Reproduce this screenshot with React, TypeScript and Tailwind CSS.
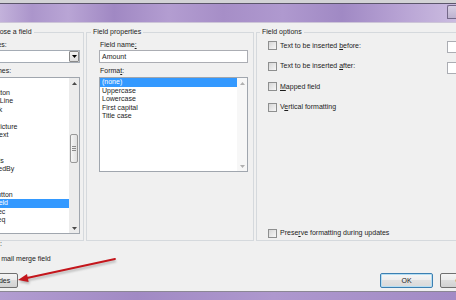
import React from 'react';

const fieldNames = [
  'Fill-in',
  'GoToButton',
  'GreetingLine',
  'Hyperlink',
  'If',
  'IncludePicture',
  'IncludeText',
  'Index',
  'Info',
  'Keywords',
  'LastSavedBy',
  'Link',
  'ListNum',
  'MacroButton',
  'MergeField',
  'MergeRec',
  'MergeSeq',
  'Next',
  'NextIf',
];

const formats = ['(none)', 'Uppercase', 'Lowercase', 'First capital', 'Title case'];

function Tri({ up, dim }: { up?: boolean; dim?: boolean }) {
  return (
    <svg width="5" height="3" viewBox="0 0 5 3">
      <path d={up ? 'M0 3L2.5 0L5 3Z' : 'M0 0L5 0L2.5 3Z'} fill={dim ? '#b0b0b0' : '#4a4a4a'} />
    </svg>
  );
}

function CheckBox() {
  return (
    <div className="h-[9px] w-[9px] shrink-0 border border-[#8e8f8f] bg-[linear-gradient(135deg,#d6d6d6,#f7f7f7)]" />
  );
}

function Button({ label, primary }: { label: string; primary?: boolean }) {
  return (
    <div
      className={
        primary
          ? 'flex h-[15px] w-[53px] shrink-0 items-center justify-center rounded-[2px] border border-[#3c7fb1] bg-[linear-gradient(#f6f6f6,#ededed_50%,#e1e1e1_50%,#d9d9d9)] shadow-[inset_0_0_0_1px_#b5def3]'
          : 'flex h-[15px] w-[53px] shrink-0 items-center justify-center rounded-[2px] border border-[#707070] bg-[linear-gradient(#f4f4f4,#ebebeb_50%,#dddddd_50%,#d1d1d1)]'
      }
    >
      {label}
    </div>
  );
}

export default function App() {
  return (
    <div className="relative h-[300px] w-[456px] overflow-hidden bg-[#f0f0f0] font-['Liberation_Sans',Arial,sans-serif] text-[7px] leading-[8px] text-[#1c1c1c]">
      {/* Window title bar */}
      <div className="h-[3px] bg-[#d3d3d6]" />
      <div className="h-[1px] bg-[#5c566b]" />
      <div className="flex h-[18px] justify-end bg-[linear-gradient(90deg,#c3b2db_0%,#ab95cb_7%,#b9a5d5_15%,#a088c3_25%,#b39dd1_37%,#a68ec7_49%,#af99cf_62%,#a089c4_75%,#b6a1d3_87%,#cbbce0_100%)]">
        <div className="mt-[1px] h-[14px] w-[9px] rounded-tl-[2px] border border-r-0 border-[#736888] bg-[linear-gradient(#d8d0e4,#bdb2cf)]" />
      </div>
      <div className="h-[1px] bg-[#cdc5d8]" />

      {/* Dialog body */}
      <div className="h-[268px] pt-[5px]">
        <div className="ml-[-42px] flex gap-[2px]">
          {/* Please choose a field */}
          <fieldset className="h-[213px] w-[126px] shrink-0 border border-[#d5d9dd] pl-[11px] pr-[3px]">
            <legend className="ml-[-7px] px-[2px] leading-[8px] whitespace-nowrap">Please choose a field</legend>
            <div className="flex flex-col">
              <div className="ml-[1px] mt-[5px] h-[8px] whitespace-nowrap">Categories:</div>
              <div className="mt-[1px] flex h-[13px] w-[110px] justify-end border border-[#a5acb5] bg-white">
                <div className="flex h-[11px] w-[10px] items-center justify-center rounded-[1px] border border-[#8a8a8a] bg-[linear-gradient(#f3f3f3,#dedede)]">
                  <svg width="5" height="3" viewBox="0 0 5 3">
                    <path d="M0 0L5 0L2.5 3Z" fill="#000" />
                  </svg>
                </div>
              </div>
              <div className="ml-[1px] mt-[4px] h-[8px] whitespace-nowrap">Field names:</div>
              <div className="mt-[2px] flex h-[157px] w-[110px] border border-[#a0a6ae] bg-white">
                <div className="flex-1 overflow-hidden pt-[2px]">
                  {fieldNames.map((name) => (
                    <div
                      key={name}
                      className={
                        name === 'MergeField'
                          ? 'h-[8.5px] whitespace-nowrap bg-[#3399ff] pl-[2px] leading-[8.5px] text-white'
                          : 'h-[8.5px] whitespace-nowrap pl-[2px] leading-[8.5px]'
                      }
                    >
                      {name}
                    </div>
                  ))}
                </div>
                <div className="flex w-[10px] flex-col bg-[#ececec]">
                  <div className="flex h-[10px] items-center justify-center">
                    <Tri up />
                  </div>
                  <div className="h-[46px]" />
                  <div className="mx-[1px] flex h-[29px] flex-col items-center justify-center gap-[1px] rounded-[2px] border border-[#989898] bg-[linear-gradient(90deg,#f5f5f5,#e0e0e0)]">
                    <div className="h-[1px] w-[4px] bg-[#8a8a8a]" />
                    <div className="h-[1px] w-[4px] bg-[#8a8a8a]" />
                    <div className="h-[1px] w-[4px] bg-[#8a8a8a]" />
                  </div>
                  <div className="flex-1" />
                  <div className="flex h-[10px] items-center justify-center">
                    <Tri />
                  </div>
                </div>
              </div>
            </div>
          </fieldset>

          {/* Field properties */}
          <fieldset className="h-[213px] w-[168px] shrink-0 border border-[#d5d9dd] pl-[12px] pr-[5px]">
            <legend className="ml-[-8px] px-[2px] leading-[8px]">Field properties</legend>
            <div className="flex flex-col">
              <div className="ml-[1px] mt-[5px] h-[8px]">
                Field name<span className="underline underline-offset-[1px]">:</span>
              </div>
              <div className="mt-[1px] flex h-[13px] w-[149px] items-center border border-[#abadb3] bg-white px-[2px]">
                Amount
              </div>
              <div className="ml-[1px] mt-[4px] h-[8px]">
                Forma<span className="underline underline-offset-[1px]">t</span>:
              </div>
              <div className="mt-[2px] flex h-[95px] w-[149px] border border-[#a0a6ae] bg-white">
                <div className="flex-1">
                  {formats.map((f, i) => (
                    <div
                      key={f}
                      className={
                        i === 0
                          ? 'h-[8.5px] bg-[#3399ff] pl-[2px] leading-[8.5px] text-white'
                          : 'h-[8.5px] pl-[2px] leading-[8.5px]'
                      }
                    >
                      {f}
                    </div>
                  ))}
                </div>
                <div className="flex w-[10px] flex-col justify-between bg-[#f7f7f7]">
                  <div className="flex h-[10px] items-center justify-center">
                    <Tri up dim />
                  </div>
                  <div className="flex h-[10px] items-center justify-center">
                    <Tri dim />
                  </div>
                </div>
              </div>
            </div>
          </fieldset>

          {/* Field options */}
          <fieldset className="h-[213px] w-[300px] shrink-0 border border-[#d5d9dd] pl-[11px]">
            <legend className="ml-[-8px] px-[2px] leading-[8px]">Field options</legend>
            <div className="mt-[3px] flex flex-col gap-[7.5px]">
              <div className="flex h-[13px] w-[239px] items-center gap-[3px]">
                <CheckBox />
                <span className="flex-1 whitespace-nowrap">
                  Text to be inserted <span className="underline underline-offset-[1px]">b</span>efore:
                </span>
                <div className="mt-[3px] h-[12px] w-[60px] border border-[#abadb3] bg-white" />
              </div>
              <div className="flex h-[13px] w-[239px] items-center gap-[3px]">
                <CheckBox />
                <span className="flex-1 whitespace-nowrap">
                  Text to be inserted <span className="underline underline-offset-[1px]">a</span>fter:
                </span>
                <div className="mt-[3px] h-[12px] w-[60px] border border-[#abadb3] bg-white" />
              </div>
              <div className="flex h-[13px] items-center gap-[3px]">
                <CheckBox />
                <span className="whitespace-nowrap">
                  <span className="underline underline-offset-[1px]">M</span>apped field
                </span>
              </div>
              <div className="flex h-[13px] items-center gap-[3px]">
                <CheckBox />
                <span className="whitespace-nowrap">
                  V<span className="underline underline-offset-[1px]">e</span>rtical formatting
                </span>
              </div>
            </div>
            <div className="mt-[113px] flex h-[13px] items-center gap-[3px]">
              <CheckBox />
              <span className="whitespace-nowrap">
                Prese<span className="underline underline-offset-[1px]">r</span>ve formatting during updates
              </span>
            </div>
          </fieldset>
        </div>

        {/* Description */}
        <div className="ml-[-35px] mt-[-1px] flex flex-col">
          <div className="h-[8px] whitespace-nowrap">Description:</div>
          <div className="ml-[11px] mt-[7px] h-[8px] whitespace-nowrap">Insert a mail merge field</div>
        </div>

        {/* Buttons */}
        <div className="ml-[-35px] mt-[10px] flex w-[528px] items-center justify-between">
          <Button label="Field Codes" />
          <div className="flex gap-[7px]">
            <Button label="OK" primary />
            <Button label="Cancel" />
          </div>
        </div>
      </div>

      {/* Window bottom frame */}
      <div className="h-[1px] bg-[#8b8794]" />
      <div className="h-[8px] bg-[linear-gradient(90deg,#b29dd1,#a18ac4_30%,#ae98ce_60%,#a28bc5)]" />

      {/* Red annotation arrow */}
      <svg className="pointer-events-none absolute left-0 top-0" width="456" height="300" viewBox="0 0 456 300">
        <defs>
          <filter id="sh" x="-20%" y="-50%" width="140%" height="200%">
            <feGaussianBlur stdDeviation="1.2" />
          </filter>
        </defs>
        <g filter="url(#sh)" opacity="0.45" transform="translate(1 2)">
          <line x1="115" y1="259" x2="27" y2="278" stroke="#6b6b6b" strokeWidth="2" />
          <path d="M18 280L28.6 281.9L27 274.1Z" fill="#6b6b6b" />
        </g>
        <line x1="115" y1="259" x2="27" y2="278" stroke="#c4161c" strokeWidth="1.8" strokeLinecap="round" />
        <path d="M18 280L28.6 281.9L27 274.1Z" fill="#c4161c" />
      </svg>
    </div>
  );
}
